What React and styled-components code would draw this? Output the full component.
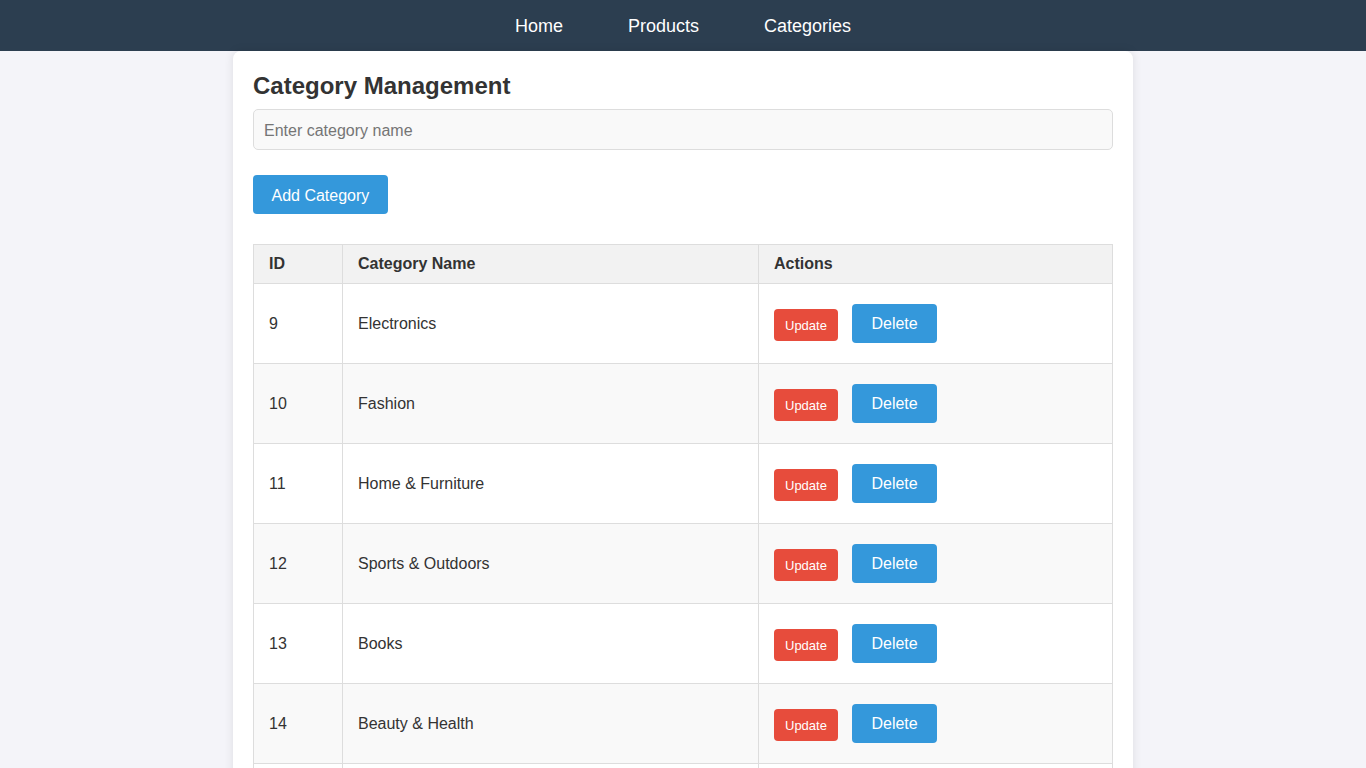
import styled, { createGlobalStyle } from "styled-components";

const GlobalStyle = createGlobalStyle`
  body {
    margin: 0;
    background: #f4f4f9;
    font-family: "Liberation Sans", Arial, sans-serif;
    color: #333;
  }
`;

const Navbar = styled.nav`
  background: #2c3e50;
  padding: 16px 0 14px;
  display: flex;
  justify-content: center;
  gap: 65px;
`;

const NavLink = styled.a`
  color: #fff;
  font-size: 18px;
  line-height: 21px;
  text-decoration: none;
  cursor: pointer;
`;

const Card = styled.div`
  width: 900px;
  box-sizing: border-box;
  margin: 0 auto;
  padding: 20px;
  background: #fff;
  border-radius: 8px;
  box-shadow: 0 0 10px rgba(0, 0, 0, 0.1);
`;

const Title = styled.h2`
  margin: 0 0 8px;
  font-size: 24px;
  line-height: 30px;
  font-weight: bold;
  color: #333;
`;

const Input = styled.input`
  display: block;
  width: 100%;
  height: 41px;
  box-sizing: border-box;
  padding: 11px 10px 9px;
  border: 1px solid #ddd;
  border-radius: 5px;
  background: #f9f9f9;
  font-family: "Liberation Sans", Arial, sans-serif;
  font-size: 16px;
  color: #333;
  outline: none;

  &::placeholder {
    color: #757575;
  }
`;

const Button = styled.button`
  border: none;
  border-radius: 4px;
  color: #fff;
  cursor: pointer;
  font-family: "Liberation Sans", Arial, sans-serif;
  background: ${(p) => (p.$danger ? "#e74c3c" : "#3498db")};
  font-size: ${(p) => (p.$small ? "13px" : "16px")};
  height: ${(p) => (p.$small ? "32px" : "39px")};
  padding: ${(p) => (p.$small ? "0 11px" : "0 19.5px")};
`;

const AddButton = styled(Button)`
  margin-top: 25px;
  padding: 2px 18.5px 0;
`;

const Table = styled.table`
  width: 100%;
  margin-top: 30px;
  border-collapse: collapse;
  font-size: 16px;
`;

const Th = styled.th`
  text-align: left;
  padding: 10px 15px;
  line-height: 18px;
  background: #f2f2f2;
  border: 1px solid #ddd;
  font-weight: bold;
  width: ${(p) => p.$w || "auto"};
`;

const Row = styled.tr`
  background: ${(p) => (p.$alt ? "#f9f9f9" : "#fff")};
`;

const Td = styled.td`
  padding: 15px;
  border: 1px solid #ddd;
  vertical-align: middle;
`;

const Actions = styled.div`
  display: flex;
  align-items: center;
  gap: 14px;
  padding: 5px 0;
`;

const UpdateWrap = styled.div`
  padding-top: 3px;
  display: flex;
`;

const categories = [
  { id: 9, name: "Electronics" },
  { id: 10, name: "Fashion" },
  { id: 11, name: "Home & Furniture" },
  { id: 12, name: "Sports & Outdoors" },
  { id: 13, name: "Books" },
  { id: 14, name: "Beauty & Health" },
  { id: 15, name: "Toys & Games" },
  { id: 16, name: "Automotive" },
];

const App = () => {
  return (
    <>
      <GlobalStyle />
      <Navbar>
        <NavLink>Home</NavLink>
        <NavLink>Products</NavLink>
        <NavLink>Categories</NavLink>
      </Navbar>
      <Card>
        <Title>Category Management</Title>
        <Input placeholder="Enter category name" />
        <AddButton>Add Category</AddButton>
        <Table>
          <thead>
            <tr>
              <Th $w="58px">ID</Th>
              <Th $w="385px">Category Name</Th>
              <Th>Actions</Th>
            </tr>
          </thead>
          <tbody>
            {categories.map((c, i) => (
              <Row key={c.id} $alt={i % 2 === 1}>
                <Td>{c.id}</Td>
                <Td>{c.name}</Td>
                <Td>
                  <Actions>
                    <UpdateWrap>
                      <Button $danger $small>Update</Button>
                    </UpdateWrap>
                    <Button>Delete</Button>
                  </Actions>
                </Td>
              </Row>
            ))}
          </tbody>
        </Table>
      </Card>
    </>
  );
};

export default App;
